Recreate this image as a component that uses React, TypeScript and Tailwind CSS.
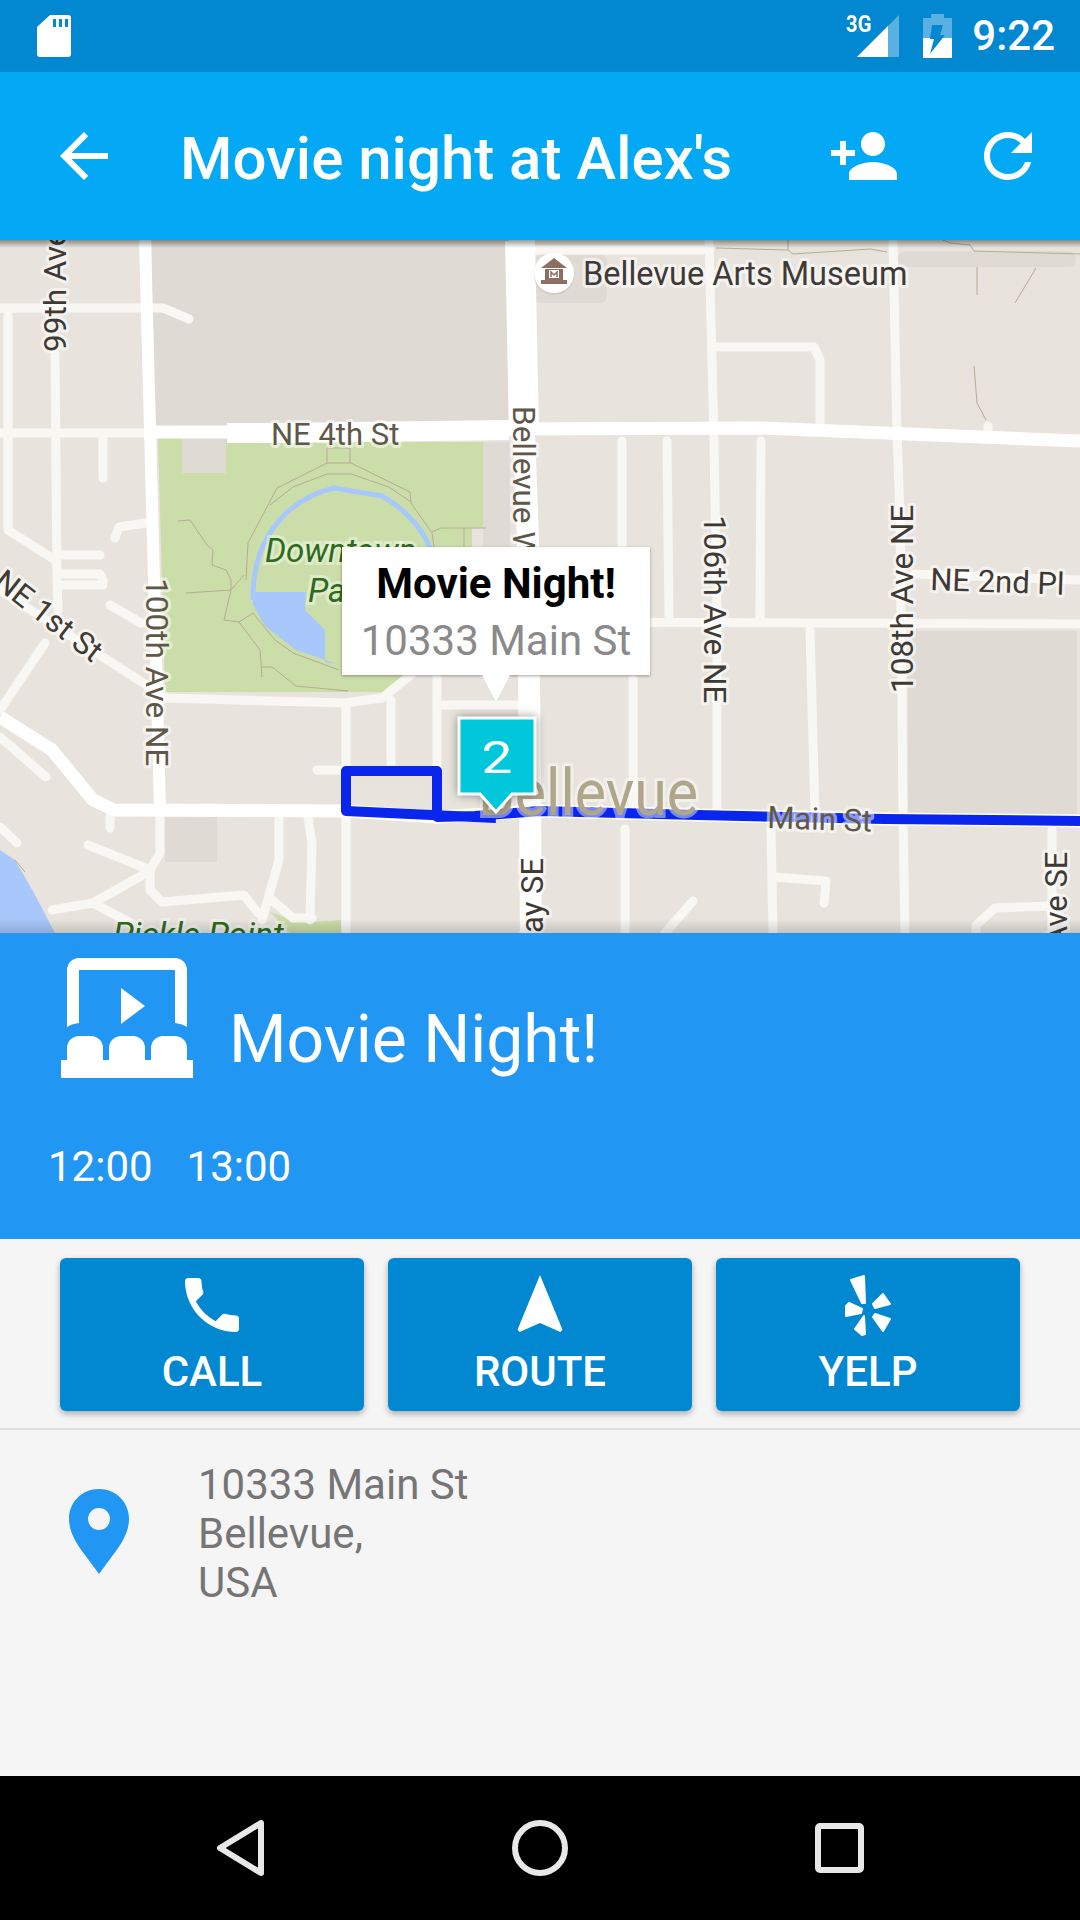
const majorRoads = [
  { points: "145,240 154,580 160,810", width: 12 },
  { points: "0,717 52,750 93,800 114,810 346,811 437,817 540,811 698,815 884,819 1080,821", width: 13 },
  { points: "151,432 227,432", width: 13 },
  { points: "227,433 272,433 509,430", width: 20 },
  { points: "509,429 760,428 884,433 1080,441", width: 13 },
  { points: "520,240 524,430", width: 30 },
  { points: "524,430 528,540 531,933", width: 22 },
]

const minorRoads = [
  "0,433 145,433",
  "0,308 163,308 189,319",
  "55,353 57,580 58,610",
  "8,315 8,530 55,560",
  "103,437 103,478",
  "60,555 100,555",
  "146,523 119,527 115,538",
  "60,574 100,574 103,580 103,585 60,585",
  "0,590 103,657 165,697",
  "110,605 141,623",
  "45,643 0,710",
  "160,817 160,853 150,870 150,890 162,902 244,895 258,913",
  "88,845 150,870",
  "148,872 93,903 52,910",
  "93,903 138,927",
  "110,817 110,828",
  "0,827 17,843",
  "0,737 46,777",
  "279,817 279,860 262,920",
  "308,817 312,843 310,920",
  "272,900 293,918 312,918",
  "346,817 346,933",
  "391,700 391,765",
  "346,703 346,765",
  "317,770 341,770",
  "165,698 344,703 382,698 413,673",
  "437,675 437,770",
  "437,705 520,705",
  "523,250 705,250",
  "709,240 714,441 717,620 717,816",
  "716,347 814,347 820,360 820,428",
  "893,240 897,433 900,515 902,698 903,818 905,933",
  "988,426 988,438",
  "622,441 622,557",
  "633,679 633,816",
  "667,441 669,620",
  "761,441 760,620",
  "530,622 1080,624",
  "810,630 815,815",
  "914,574 1080,580",
  "625,829 625,933",
  "771,830 773,933",
  "774,877 826,881 824,903",
  "693,901 665,933",
  "976,933 976,925 995,908 1050,906",
  "1052,830 1052,933",
]

const parkPaths = [
  "246,580 248,543 277,488 327,463 351,463 410,492 411,503 432,533 434,547",
  "270,505 293,487 327,474 351,474 389,487 411,502",
  "327,463 327,448 350,448 350,463",
  "178,521 190,520 207,545 213,550 212,565 226,570 231,580 231,590 224,620 239,622 260,650 262,677",
  "262,667 272,667 296,686 348,691",
  "186,593 231,590 244,575",
  "239,622 253,613 275,640 293,653 339,670",
  "432,532 441,528 486,528",
  "464,528 464,547",
  "716,248 788,250 793,254 870,249 887,252",
  "788,240 788,250",
  "943,240 950,243 970,245 974,251 1080,254",
  "977,267 977,295",
  "1036,268 1015,303",
  "974,366 977,403 986,420",
  "15,860 25,872",
]

const labels = [
  { text: "99th Ave NE", x: 66, y: 352, rot: -90, fill: "#3f3a34", size: 31.5 },
  { text: "NE 4th St", x: 271, y: 445, rot: 0, fill: "#5f5848", size: 31 },
  { text: "Bellevue Way", x: 513, y: 406, rot: 90, fill: "#5f5848", size: 31.5 },
  { text: "100th Ave NE", x: 146, y: 578, rot: 90, fill: "#5f5848", size: 31.5 },
  { text: "106th Ave NE", x: 704, y: 515, rot: 90, fill: "#3f3a34", size: 31.5 },
  { text: "108th Ave NE", x: 913, y: 693, rot: -90, fill: "#3f3a34", size: 31.5 },
  { text: "NE 2nd Pl", x: 930, y: 590, rot: 2, fill: "#3f3a34", size: 31 },
  { text: "Main St", x: 767, y: 828, rot: 2, fill: "#5f5848", size: 31 },
  { text: "Bellevue Arts Museum", x: 583, y: 285, rot: 0, fill: "#3f3a36", size: 32.5 },
  { text: "NE 1st St", x: -8, y: 585, rot: 38, fill: "#3f3a34", size: 31 },
  { text: "Way SE", x: 543, y: 960, rot: -90, fill: "#3f3a34", size: 31 },
  { text: "Ave SE", x: 1067, y: 946, rot: -90, fill: "#3f3a34", size: 31 },
]

function MapLabel({ text, x, y, rot, fill, size }: { text: string; x: number; y: number; rot: number; fill: string; size: number }) {
  return (
    <text
      x={x}
      y={y}
      transform={`rotate(${rot} ${x} ${y})`}
      fill={fill}
      fontSize={size}
      stroke="#fff"
      strokeOpacity={0.55}
      strokeWidth={6}
      strokeLinejoin="round"
      paintOrder="stroke"
    >
      {text}
    </text>
  )
}

function MapCanvas() {
  return (
    <svg viewBox="0 240 1080 693" className="block h-full w-full">
      <rect x="0" y="240" width="1080" height="693" fill="#e8e4dd" />

      {/* buildings */}
      <rect x="152" y="240" width="356" height="190" fill="#dfdbd4" />
      <rect x="483" y="442" width="27" height="105" fill="#dfdbd4" />
      <rect x="165" y="817" width="52" height="45" fill="#dfdbd4" />
      <rect x="908" y="631" width="169" height="183" fill="#dfdbd4" />
      <rect x="535" y="255" width="72" height="48" rx="6" fill="#dfdbd4" />
      <rect x="898" y="251" width="178" height="16" rx="8" fill="#dfdbd4" />

      {/* park and water */}
      <polygon
        points="158,438 227,438 272,442 483,442 483,528 472,528 472,600 425,660 385,692 165,692"
        fill="#cbdea9"
      />
      <polygon points="270,912 290,933 341,933 341,920 315,922 293,920" fill="#cbdea9" />
      <rect x="182" y="438" width="44" height="35" fill="#dfdbd4" />
      <path
        d="M253 600 C252 540 285 500 334 488 L382 496 C410 512 428 535 434 560"
        fill="none"
        stroke="#a8c8fb"
        strokeWidth="5"
      />
      <polygon
        points="253,592 306,592 305,610 325,630 325,662 337,664 296,650 265,626 253,605"
        fill="#a8c8fb"
      />
      <polygon points="0,850 15,860 34,893 55,933 0,933" fill="#a8c8fb" />
      {parkPaths.map((points) => (
        <polyline key={points} points={points} fill="none" stroke="#b5ab96" strokeWidth="1" />
      ))}

      {/* roads */}
      {minorRoads.map((points) => (
        <polyline
          key={points}
          points={points}
          fill="none"
          stroke="#f8f7f3"
          strokeWidth="9"
          strokeLinecap="round"
          strokeLinejoin="round"
        />
      ))}
      {majorRoads.map((road) => (
        <polyline
          key={road.points}
          points={road.points}
          fill="none"
          stroke="#ffffff"
          strokeWidth={road.width}
          strokeLinejoin="round"
        />
      ))}

      {/* route */}
      <polyline
        points="496,818 346,811 346,771 437,771 437,817 475,816 540,811 698,815 884,819 1080,821"
        fill="none"
        stroke="#0a25ec"
        strokeWidth="10"
        strokeLinejoin="round"
      />

      {/* labels */}
      {labels.map((label) => (
        <MapLabel key={label.text} {...label} />
      ))}
      <text x="265" y="562" fill="#2d6b1a" fontSize="33" fontStyle="italic" stroke="#fff" strokeOpacity="0.4" strokeWidth="6" paintOrder="stroke">
        Downtown
      </text>
      <text x="308" y="602" fill="#2d6b1a" fontSize="33" fontStyle="italic" stroke="#fff" strokeOpacity="0.4" strokeWidth="6" paintOrder="stroke">
        Park
      </text>
      <text x="113" y="946" fill="#2d6b1a" fontSize="33.5" fontStyle="italic" stroke="#fff" strokeOpacity="0.4" strokeWidth="6" paintOrder="stroke">
        Pickle Point
      </text>
      <text
        x="478"
        y="815"
        textLength="220"
        lengthAdjust="spacingAndGlyphs"
        fill="#b0a68a"
        fontSize="64"
        stroke="#fff"
        strokeOpacity="0.45"
        strokeWidth="6"
        paintOrder="stroke"
      >
        Bellevue
      </text>

      {/* museum pin */}
      <circle cx="554" cy="275" r="20" fill="#d0ccc6" />
      <circle cx="554" cy="273" r="20" fill="#ffffff" />
      <path d="M541 268 L554 258 L567 268 Z M545 269 H563 V280 H545 Z M541 280 H567 V284 H541 Z" fill="#8d6e63" />
      <rect x="549" y="270" width="10" height="8" fill="#ffffff" />
      <path d="M551 277 V272 L554 275 L557 272 V277" fill="none" stroke="#8d6e63" strokeWidth="1.5" />
    </svg>
  )
}

function MapCallout() {
  return (
    <div className="absolute left-[342px] top-[307px] flex flex-col items-center">
      <div className="flex h-[128px] w-[308px] flex-col items-center bg-white pt-[13px] shadow-[0_1px_3px_rgba(0,0,0,0.35)]">
        <span className="text-[42px] font-bold leading-[48px] text-black">Movie Night!</span>
        <span className="mt-[9px] text-[42px] leading-[48px] text-[#8a8a8a]">10333 Main St</span>
      </div>
      <div className="h-[27px] w-[28px] bg-white [clip-path:polygon(0_0,100%_0,50%_100%)]" />
    </div>
  )
}

function MapMarker() {
  return (
    <div className="absolute left-[456px] top-[475px] h-[100px] w-[82px]">
      <svg viewBox="0 0 82 100" className="absolute inset-0 drop-shadow-[0_0_5px_rgba(60,60,60,0.55)]">
        <polygon
          points="3,3 79,3 79,79 56,79 40,97 24,79 3,79"
          fill="#00c8da"
          stroke="#ffffff"
          strokeWidth="3"
        />
      </svg>
      <span className="absolute left-0 top-[17px] w-full scale-x-125 text-center text-[44px] font-normal leading-[52px] text-white">
        2
      </span>
    </div>
  )
}

function ActionButton({ label, children }: { label: string; children: React.ReactNode }) {
  return (
    <div className="flex h-[153px] w-[304px] flex-col items-center rounded-[6px] bg-[#0288d1] pt-[11px] shadow-[0_3px_6px_rgba(0,0,0,0.3)]">
      {children}
      <span className="mt-[6px] text-[42px] font-medium leading-[50px] text-white">{label}</span>
    </div>
  )
}

export default function App() {
  return (
    <div className="flex h-[1920px] w-[1080px] flex-col overflow-hidden bg-[#f5f5f5] font-['Roboto',sans-serif]">
      {/* Status bar */}
      <div className="flex h-[72px] items-center justify-between bg-[#0288d1] pl-[37px] pr-[25px]">
        <svg width="34" height="42" viewBox="0 0 34 42">
          <path d="M13 0H31a3 3 0 0 1 3 3V39a3 3 0 0 1-3 3H3a3 3 0 0 1-3-3V12Z" fill="#fff" />
          <path d="M16 4h3v8h-3zM22 4h3v8h-3zM28 4h3v8h-3z" fill="#0288d1" />
        </svg>
        <div className="flex items-center">
          <div className="relative h-[44px] w-[52px]">
            <span className="absolute left-[-2px] top-[-2px] origin-left scale-x-[.85] text-[24px] font-bold leading-[24px] text-white">3G</span>
            <svg width="52" height="44" viewBox="0 0 52 44" className="absolute inset-0">
              <polygon points="9,43 51,1 51,43" fill="#fff" fillOpacity="0.35" />
              <polygon points="9,43 40,12 40,43" fill="#fff" />
            </svg>
          </div>
          <svg width="29" height="44" viewBox="0 0 29 44" className="ml-[23px]">
            <path d="M8 0h13v4h8v40H0V4h8Z" fill="#fff" fillOpacity="0.35" />
            <path d="M0 24h29v20H0Z" fill="#fff" />
            <path d="M9 11h11l-3 10h5L7 40l4-15H7Z" fill="#0288d1" />
          </svg>
          <span className="ml-[20px] text-[42px] font-medium leading-[48px] text-white">9:22</span>
        </div>
      </div>

      {/* Toolbar */}
      <div className="flex h-[168px] items-center bg-[#03a9f4] pl-[48px]">
        <svg width="72" height="72" viewBox="0 0 24 24" fill="#fff">
          <path d="M20 11H7.83l5.59-5.59L12 4l-8 8 8 8 1.41-1.41L7.83 13H20v-2z" />
        </svg>
        <span className="ml-[60px] mt-[5px] text-[60px] font-medium leading-[72px] text-white">Movie night at Alex's</span>
        <svg width="72" height="72" viewBox="0 0 24 24" fill="#fff" className="ml-auto">
          <path d="M15 12c2.21 0 4-1.79 4-4s-1.79-4-4-4-4 1.79-4 4 1.79 4 4 4zm-9-2V7H4v3H1v2h3v3h2v-3h3v-2H6zm9 4c-2.67 0-8 1.34-8 4v2h16v-2c0-2.66-5.33-4-8-4z" />
        </svg>
        <svg width="72" height="72" viewBox="0 0 24 24" fill="#fff" className="ml-[72px] mr-[36px]">
          <path d="M17.65 6.35C16.2 4.9 14.21 4 12 4c-4.42 0-7.99 3.58-7.99 8s3.57 8 7.99 8c3.73 0 6.84-2.55 7.73-6h-2.08c-.82 2.33-3.04 4-5.65 4-3.31 0-6-2.69-6-6s2.69-6 6-6c1.66 0 3.14.69 4.22 1.78L13 11h7V4l-2.35 2.35z" />
        </svg>
      </div>

      {/* Map */}
      <div className="relative h-[693px] shrink-0 overflow-hidden">
        <MapCanvas />
        <div className="absolute inset-x-0 top-0 h-[8px] bg-gradient-to-b from-black/40 to-transparent" />
        <div className="absolute inset-x-0 bottom-0 h-[14px] bg-gradient-to-t from-black/15 to-transparent" />
        <MapMarker />
        <MapCallout />
      </div>

      {/* Event header */}
      <div className="flex h-[306px] shrink-0 flex-col bg-[#2196f3]">
        <div className="flex items-end pl-[61px] pt-[25px]">
          <svg width="132" height="120" viewBox="0 0 132 120" fill="#fff">
            <path d="M6 69V12A12 12 0 0 1 18 0H114A12 12 0 0 1 126 12V69Q122 66 114 65V12H18V65Q10 66 6 69Z" />
            <path d="M60 30L84 48L60 66Z" />
            <path d="M0 102H6V90A12 12 0 0 1 18 78H30A12 12 0 0 1 42 90V102H48V90A12 12 0 0 1 60 78H72A12 12 0 0 1 84 90V102H90V90A12 12 0 0 1 102 78H114A12 12 0 0 1 126 90V102H132V120H0Z" />
          </svg>
          <span className="ml-[36px] text-[66px] font-normal leading-[76px] text-white">Movie Night!</span>
        </div>
        <div className="mt-[65px] flex gap-[34px] pl-[48px] text-[42px] font-normal leading-[48px] text-white">
          <span>12:00</span>
          <span>13:00</span>
        </div>
      </div>

      {/* Actions */}
      <div className="flex gap-[24px] border-b-2 border-[#e0e0e0] px-[60px] pb-[17px] pt-[19px]">
        <ActionButton label="CALL">
          <svg width="72" height="72" viewBox="0 0 24 24" fill="#fff">
            <path d="M6.62 10.79c1.44 2.83 3.76 5.14 6.59 6.59l2.2-2.2c.27-.27.67-.36 1.02-.24 1.12.37 2.33.57 3.57.57.55 0 1 .45 1 1V20c0 .55-.45 1-1 1-9.39 0-17-7.61-17-17 0-.55.45-1 1-1h3.5c.55 0 1 .45 1 1 0 1.25.2 2.45.57 3.57.11.35.03.74-.25 1.02l-2.2 2.2z" />
          </svg>
        </ActionButton>
        <ActionButton label="ROUTE">
          <svg width="72" height="72" viewBox="0 0 24 24" fill="#fff">
            <path d="M12 2L4.5 20.29l.71.71L12 18l6.79 3 .71-.71z" />
          </svg>
        </ActionButton>
        <ActionButton label="YELP">
          <svg width="72" height="72" viewBox="832 1270 72 72" fill="#fff" stroke="#fff" strokeWidth="2" strokeLinejoin="round">
            <polygon points="851,1281 864,1277 865,1304 862,1304" />
            <polygon points="883,1295 890,1305 875,1309 873,1305" />
            <polygon points="849,1304 862,1310 861,1314 846,1317 846,1307" />
            <polygon points="875,1315 890,1320 883,1332 873,1318" />
            <polygon points="864,1317 865,1335 862,1336 855,1330" />
          </svg>
        </ActionButton>
      </div>

      {/* Address */}
      <div className="flex flex-1 items-start pl-[69px] pt-[30px]">
        <svg width="60" height="85" viewBox="0 0 60 85" className="mt-[29px] shrink-0">
          <path
            fillRule="evenodd"
            d="M30 0C13 0 0 13 0 30C0 45 10 58 16 66L30 85L44 66C50 58 60 45 60 30C60 13 47 0 30 0ZM30 19A11 11 0 1 1 30 41A11 11 0 1 1 30 19Z"
            fill="#2196f3"
          />
        </svg>
        <div className="ml-[69px] flex flex-col text-[42px] leading-[49px] text-[#757575]">
          <span>10333 Main St</span>
          <span>Bellevue,</span>
          <span>USA</span>
        </div>
      </div>

      {/* Navigation bar */}
      <div className="flex h-[144px] shrink-0 items-center bg-black pl-[217px]">
        <svg width="47" height="56" viewBox="0 0 47 56" fill="none" stroke="#e8e8e8" strokeWidth="6" strokeLinejoin="round">
          <path d="M44 3V53L3 28Z" />
        </svg>
        <svg width="56" height="56" viewBox="0 0 56 56" fill="none" stroke="#e8e8e8" strokeWidth="6" className="ml-[248px]">
          <circle cx="28" cy="28" r="25" />
        </svg>
        <svg width="49" height="50" viewBox="0 0 49 50" fill="none" stroke="#e8e8e8" strokeWidth="6" strokeLinejoin="round" className="ml-[247px]">
          <rect x="3" y="3" width="43" height="44" rx="2" />
        </svg>
      </div>
    </div>
  )
}
